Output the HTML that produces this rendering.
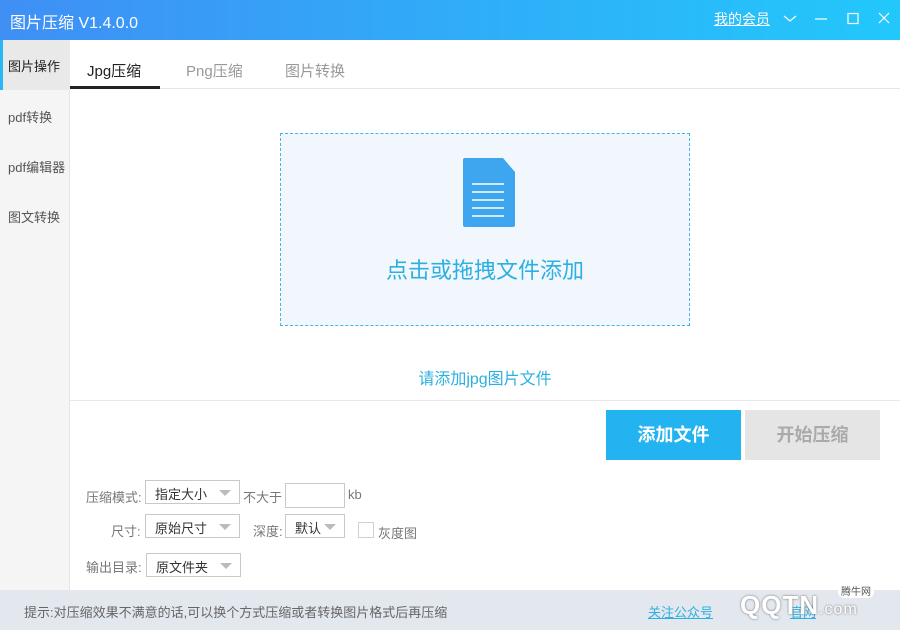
<!DOCTYPE html>
<html><head><meta charset="utf-8"><style>
*{margin:0;padding:0;box-sizing:border-box}
body{width:900px;height:630px;position:relative;overflow:hidden;background:#fff;font-family:"Liberation Sans","Noto Sans CJK SC",sans-serif;font-size:13px;color:#333}
.abs{position:absolute}
.top{left:0;top:0;width:900px;height:40px;background:linear-gradient(90deg,#3f8ff5,#22c8fb)}
.sel{border:1px solid #c9c9c9;background:#fff;height:24px;font-size:13px;color:#333;padding:3px 0 0 9px}
.sel:after{content:"";position:absolute;right:8px;top:9px;border-left:6px solid transparent;border-right:6px solid transparent;border-top:6px solid #bbb}
.lab{color:#777;font-size:13px}
</style></head><body>
<div class="abs top"></div>
<div class="abs" style="left:10px;top:9px;color:#fff;font-size:16px">图片压缩 V1.4.0.0</div>
<div class="abs" style="left:714px;top:9px;color:#fff;font-size:14px;text-decoration:underline">我的会员</div>
<svg class="abs" style="left:780px;top:10px" width="120" height="20" fill="none" stroke="#fff" stroke-width="1.2">
<path d="M4 6l6 5 6-5"/><path d="M35 9h12"/><rect x="68" y="3.5" width="10" height="10"/><path d="M99 3l10 10M109 3L99 13"/></svg>
<div class="abs" style="left:0;top:40px;width:70px;height:550px;background:#f5f5f5;border-right:1px solid #e5e5e5"></div>
<div class="abs" style="left:0;top:40px;width:70px;height:50px;background:#e9e9e9;border-left:3px solid #29b6f6"></div>
<div class="abs" style="left:8px;top:56px;font-size:13px;color:#222">图片操作</div>
<div class="abs" style="left:8px;top:107px;color:#555">pdf转换</div>
<div class="abs" style="left:8px;top:157px;color:#555">pdf编辑器</div>
<div class="abs" style="left:8px;top:207px;color:#555">图文转换</div>
<div class="abs" style="left:70px;top:88px;width:830px;height:1px;background:#e5e5e5"></div>
<div class="abs" style="left:70px;top:86px;width:90px;height:3px;background:#222"></div>
<div class="abs" style="left:87px;top:60px;font-size:15px;color:#222">Jpg压缩</div>
<div class="abs" style="left:186px;top:60px;font-size:15px;color:#999">Png压缩</div>
<div class="abs" style="left:285px;top:60px;font-size:15px;color:#999">图片转换</div>
<div class="abs" style="left:280px;top:133px;width:410px;height:193px;border:1px dashed #45b6ea;background:#f1f7fd"></div>
<svg class="abs" style="left:462px;top:157px" width="55" height="72"><path d="M3 1h38l12 14v53a2 2 0 0 1-2 2H3a2 2 0 0 1-2-2V3a2 2 0 0 1 2-2z" fill="#3ea6ef"/><g stroke="#fff" stroke-width="1.5"><path d="M10 27h32M10 35h32M10 43h32M10 51h32M10 59h32"/></g></svg>
<div class="abs" style="left:280px;top:253px;width:410px;text-align:center;font-size:22px;color:#2bb0e0">点击或拖拽文件添加</div>
<div class="abs" style="left:70px;top:365px;width:830px;text-align:center;font-size:16px;color:#2bb0e0">请添加jpg图片文件</div>
<div class="abs" style="left:70px;top:400px;width:830px;height:1px;background:#e8e8e8"></div>
<div class="abs" style="left:606px;top:410px;width:135px;height:50px;background:#22b3f0;color:#fff;font-size:18px;font-weight:bold;text-align:center;line-height:50px">添加文件</div>
<div class="abs" style="left:745px;top:410px;width:135px;height:50px;background:#e5e5e5;color:#aaa;font-size:18px;font-weight:bold;text-align:center;line-height:50px">开始压缩</div>
<div class="abs lab" style="left:86px;top:487px">压缩模式:</div>
<div class="abs sel" style="left:145px;top:480px;width:95px">指定大小</div>
<div class="abs lab" style="left:243px;top:487px">不大于</div>
<div class="abs" style="left:285px;top:483px;width:60px;height:25px;border:1px solid #c9c9c9"></div>
<div class="abs lab" style="left:348px;top:487px">kb</div>
<div class="abs lab" style="left:111px;top:521px">尺寸:</div>
<div class="abs sel" style="left:145px;top:514px;width:95px">原始尺寸</div>
<div class="abs lab" style="left:253px;top:521px">深度:</div>
<div class="abs sel" style="left:285px;top:514px;width:60px">默认</div>
<div class="abs" style="left:358px;top:522px;width:16px;height:16px;border:1px solid #d0d0d0"></div>
<div class="abs lab" style="left:378px;top:523px">灰度图</div>
<div class="abs lab" style="left:86px;top:557px">输出目录:</div>
<div class="abs sel" style="left:146px;top:553px;width:95px">原文件夹</div>
<div class="abs" style="left:0;top:590px;width:900px;height:40px;background:#e3e7ee"></div>
<div class="abs" style="left:24px;top:602px;color:#666">提示:对压缩效果不满意的话,可以换个方式压缩或者转换图片格式后再压缩</div>
<div class="abs" style="left:648px;top:602px;color:#2bb0e0;text-decoration:underline">关注公众号</div>
<div class="abs" style="left:790px;top:602px;color:#2bb0e0;text-decoration:underline">官网</div>
<div class="abs" style="left:740px;top:590px;font-size:26px;font-weight:bold;color:#fff;text-shadow:0 0 2px #666;letter-spacing:1px">QQTN<span style="font-size:16px;font-weight:normal">.com</span></div>
<div class="abs" style="left:838px;top:583px;font-size:10px;color:#555;background:#fff;border-radius:6px;padding:0 3px">腾牛网</div>
</body></html>
